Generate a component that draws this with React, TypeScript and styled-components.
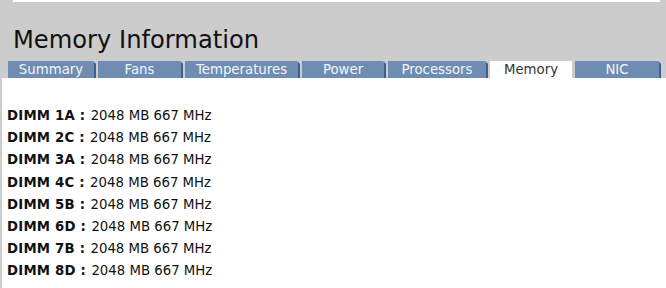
import styled, { createGlobalStyle } from "styled-components";

const GlobalStyle = createGlobalStyle`
  html, body {
    margin: 0;
    padding: 0;
    background-color: #cccccc;
    font-family: "DejaVu Sans", Verdana, sans-serif;
  }
`;

const Page = styled.div`
  width: 666px;
  height: 288px;
  overflow: hidden;
  background-color: #cccccc;
`;

const TopStrip = styled.div`
  height: 2px;
  margin-left: 13px;
  margin-right: 6px;
  background-color: #ffffff;
`;

const Header = styled.div`
  padding: 24px 0 0 13px;
`;

const Title = styled.h1`
  margin: 0;
  font-size: 24.2px;
  line-height: 28px;
  font-weight: normal;
  color: #111111;
`;

const TabBar = styled.div`
  display: flex;
  align-items: flex-end;
  margin-top: 7px;
  padding-left: 8px;
`;

const Tab = styled.div<{ $width: number; $active?: boolean }>`
  box-sizing: border-box;
  width: ${(p) => p.$width}px;
  height: 17px;
  margin-right: ${(p) => (p.$active ? 3 : 2)}px;
  line-height: 17px;
  font-size: 13.3px;
  text-align: center;
  color: ${(p) => (p.$active ? "#333333" : "#f2f5fa")};
  background-color: ${(p) => (p.$active ? "#ffffff" : "#6f8db2")};
  border-right: ${(p) => (p.$active ? "none" : "2px solid #3f5f89")};
  clip-path: ${(p) =>
    p.$active
      ? "none"
      : "polygon(0 0, calc(100% - 3px) 0, 100% 3px, 100% 100%, 0 100%)"};
`;

const Content = styled.div`
  margin-left: 2px;
  height: 209px;
  padding: 27px 0 0 5px;
  background-color: #ffffff;
`;

const Row = styled.div`
  font-size: 13.3px;
  line-height: 22.2px;
  color: #111111;
  white-space: nowrap;
`;

const Label = styled.span`
  font-weight: bold;
  letter-spacing: 0.2px;
`;

const Value = styled.span`
  margin-left: 1px;
`;

const tabs = [
  { name: "Summary", width: 88 },
  { name: "Fans", width: 85 },
  { name: "Temperatures", width: 115 },
  { name: "Power", width: 84 },
  { name: "Processors", width: 100 },
  { name: "Memory", width: 82, active: true },
  { name: "NIC", width: 86 },
];

const dimms = ["1A", "2C", "3A", "4C", "5B", "6D", "7B", "8D"];

export default function App() {
  return (
    <Page>
      <GlobalStyle />
      <TopStrip />
      <Header>
        <Title>Memory Information</Title>
      </Header>
      <TabBar>
        {tabs.map((t) => (
          <Tab key={t.name} $width={t.width} $active={t.active}>
            {t.name}
          </Tab>
        ))}
      </TabBar>
      <Content>
        {dimms.map((d) => (
          <Row key={d}>
            <Label>DIMM {d} :</Label> <Value>2048 MB 667 MHz</Value>
          </Row>
        ))}
      </Content>
    </Page>
  );
}
